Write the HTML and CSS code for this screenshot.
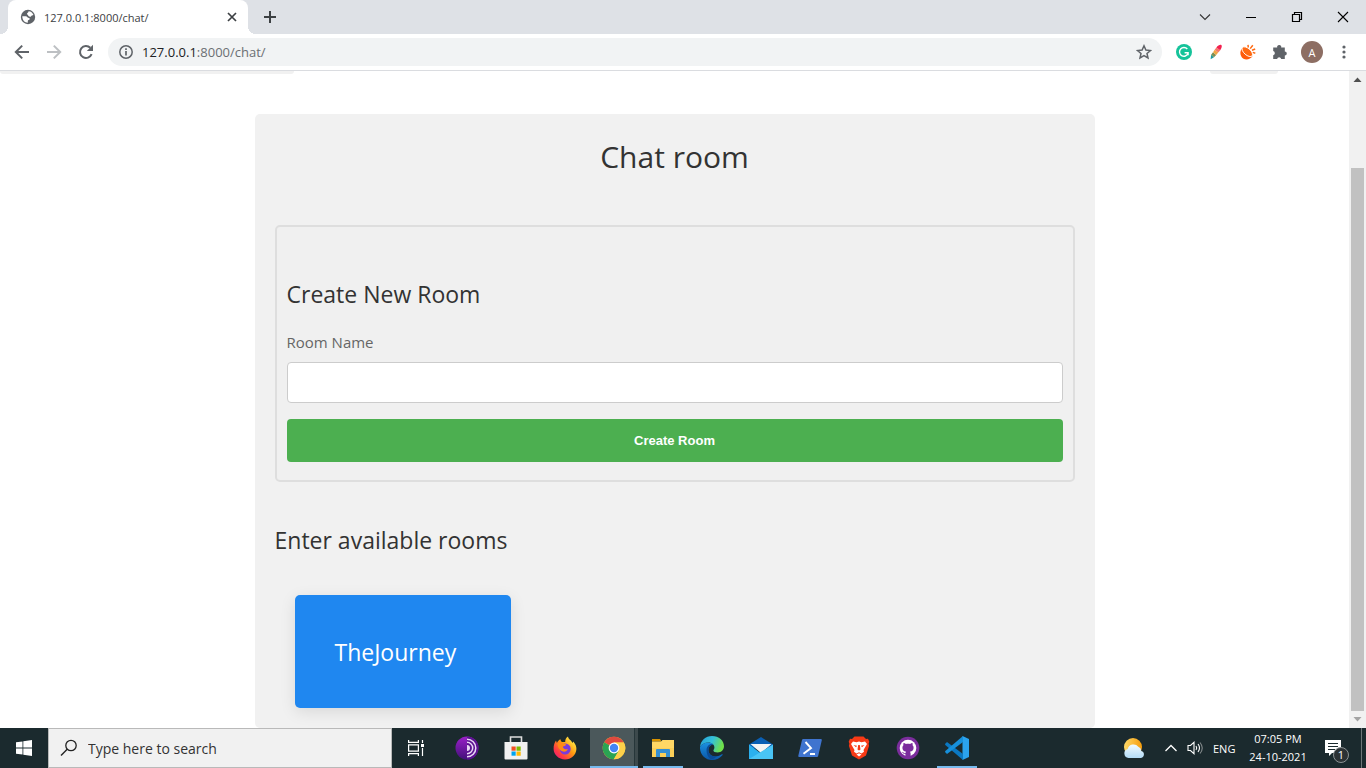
FILE: index.html
```
<!DOCTYPE html>
<html lang="en">
<head>
  <meta charset="UTF-8" />
  <meta name="viewport" content="width=device-width, initial-scale=1.0" />
  <title>127.0.0.1:8000/chat/</title>
  <link rel="stylesheet" href="styles.css">
</head>
<body>
  <!-- Browser tabs -->
  <header class="tabstrip">
    <div class="tab">
      <svg width="16" height="16" viewBox="0 0 16 16"><circle cx="8" cy="8" r="7.2" fill="#5f6368"/><path d="M2.300 7.200h3.500c1.500 0 1.800 1.800 3.200 1.800.9.200.9 1.400.2 1.800-1 .2-1.400.8-1.400 1.700v1.200C4.800 13.600 2.200 11 2.300 7.200z" fill="#fff"/><path d="M8.600 2.300c2.300.2 4 1.500 4.800 3.500-.8.800-2 .7-2.400 1.600-.8.800-2.600.3-2.800-.8-.1-.9-1.200-.8-1.200-1.800 0-1 1.400-.6 1.600-2.500z" fill="#fff"/></svg>
      <span class="tab-title">127.0.0.1:8000/chat/</span>
      <button class="icon-btn" aria-label="Close tab"><svg width="10" height="10" viewBox="0 0 10 10"><path d="M1 1l8 8M9 1L1 9" stroke="#3c4043" stroke-width="1.7"/></svg></button>
    </div>
    <button class="icon-btn new-tab" aria-label="New tab"><svg width="14" height="14" viewBox="0 0 14 14"><path d="M7 1v12M1 7h12" stroke="#3c4043" stroke-width="2"/></svg></button>
    <div class="window-buttons">
      <button class="icon-btn" aria-label="Tab search"><svg width="12" height="12" viewBox="0 0 12 12"><path d="M1 3.5l5 5 5-5" fill="none" stroke="#333" stroke-width="1.1"/></svg></button>
      <button class="icon-btn" aria-label="Minimize"><svg width="12" height="12" viewBox="0 0 12 12"><path d="M1 6.5h10" stroke="#000"/></svg></button>
      <button class="icon-btn" aria-label="Restore"><svg width="12" height="12" viewBox="0 0 12 12"><path d="M1.5 3.5h7v7h-7zM3.5 3V1.5h7v7H9" fill="none" stroke="#000" stroke-width="1.2"/></svg></button>
      <button class="icon-btn" aria-label="Close"><svg width="12" height="12" viewBox="0 0 12 12"><path d="M1 1l10 10M11 1L1 11" stroke="#000" stroke-width="1.1"/></svg></button>
    </div>
  </header>

  <!-- Address bar -->
  <nav class="toolbar">
    <div class="nav-buttons">
      <button class="icon-btn" aria-label="Back"><svg width="16" height="16" viewBox="0 0 16 16"><path d="M15 8H2M8.2 1.6L1.8 8l6.4 6.4" fill="none" stroke="#5f6368" stroke-width="2"/></svg></button>
      <button class="icon-btn" aria-label="Forward"><svg width="16" height="16" viewBox="0 0 16 16"><path d="M1 8h13M7.8 1.6L14.2 8l-6.4 6.4" fill="none" stroke="#bdc0c3" stroke-width="2"/></svg></button>
      <button class="icon-btn" aria-label="Reload"><svg width="16" height="16" viewBox="0 0 16 16"><path d="M13.6 10.2A6 6 0 1 1 12.3 3.8" fill="none" stroke="#5f6368" stroke-width="2"/><path d="M15 .8V7H8.8z" fill="#5f6368"/></svg></button>
    </div>
    <div class="address">
      <svg width="16" height="16" viewBox="0 0 16 16"><circle cx="8" cy="8" r="6.2" fill="none" stroke="#5f6368" stroke-width="1.5"/><path d="M8 7v4.4M8 4.2v1.7" stroke="#5f6368" stroke-width="1.7"/></svg>
      <div class="url" role="textbox" aria-label="Address" contenteditable="true" spellcheck="false"><b>127.0.0.1</b>:8000/chat/</div>
      <button class="icon-btn" aria-label="Bookmark"><svg width="16" height="16" viewBox="0 0 16 16"><path d="M8 1.800l1.900 4.200 4.600.5-3.500 3 1 4.500L8 11.700 4 14l1-4.500-3.500-3 4.600-.5z" fill="none" stroke="#5f6368" stroke-width="1.5"/></svg></button>
    </div>
    <div class="extensions">
      <button class="icon-btn" aria-label="Grammarly"><svg width="16" height="16" viewBox="0 0 16 16"><circle cx="8" cy="8" r="8" fill="#15c39a"/><path d="M11.300 5A4.400 4.400 0 1 0 12 9.500M8.600 8.800h3.500v2.500" fill="none" stroke="#fff" stroke-width="1.400"/></svg></button>
      <button class="icon-btn" aria-label="Color picker"><svg width="16" height="16" viewBox="0 0 16 16"><path d="M2.600 15.300l.5-4.500 2.900 2.500z" fill="#1d9aa0"/><path d="M3.100 10.800L5 8.300l3.200 2.600L6 13.300z" fill="#7d8f55"/><path d="M5 8.300l1.700-2.500L10.200 8.500l-2 2.400z" fill="#f2a443"/><path d="M6.700 5.800l1.700-2.400 3.800 2.800-2 2.300z" fill="#f4776a"/><path d="M8.400 3.400C10 1.300 12.300.200 13.300 1s.5 3-1.100 5.200z" fill="#f3204f"/></svg></button>
      <button class="icon-btn" aria-label="Coconut"><svg width="16" height="16" viewBox="0 0 16 16"><path d="M2 4.500C-.8 8 .2 13 3.500 14.800c3.300 1.600 7.500 0 9-2.800C8 12.500 3.500 9 2 4.500z" fill="#ff5b0b"/><ellipse cx="7.300" cy="7.700" rx="6.400" ry="3.300" transform="rotate(41 7.300 7.700)" fill="#ff6a13" stroke="#fff" stroke-width=".9"/><path d="M8.300 3.500L8 .8M10.200 4.600l2.600-3.300M12 6.200l3.200-1.200M12.800 8.400l2.500.8" stroke="#ff6a13" stroke-width="1.500"/></svg></button>
      <button class="icon-btn" aria-label="Extensions"><svg width="16" height="16" viewBox="0 0 16 16"><path d="M1.200 3.600h4A2 2 0 0 1 7.200 1a2 2 0 0 1 2 2.600h3.600v3.800a2 2 0 1 1 0 4V15H9.200a2.100 2.100 0 0 0-4.100 0H1.200v-3.800a2.100 2.100 0 0 0 0-4.100z" fill="#5f6368"/></svg></button>
      <button class="avatar" aria-label="Profile">A</button>
      <button class="icon-btn" aria-label="Menu"><svg width="16" height="16" viewBox="0 0 16 16" fill="#5f6368"><circle cx="8" cy="3" r="1.600"/><circle cx="8" cy="8" r="1.600"/><circle cx="8" cy="13" r="1.600"/></svg></button>
    </div>
  </nav>

  <!-- Page content -->
  <div class="viewport">
    <main class="page">
      <div class="site-nav">
        <div class="site-brand"></div>
        <div class="site-link"></div>
      </div>
      <div class="container">
        <h1>Chat room</h1>
        <form class="room-form">
          <h2>Create New Room</h2>
          <label for="room-name">Room Name</label>
          <input type="text" id="room-name" name="room-name">
          <button type="submit">Create Room</button>
        </form>
        <h2>Enter available rooms</h2>
        <div class="rooms">
          <a class="room" href="#">TheJourney</a>
        </div>
      </div>
    </main>
    <div class="scrollbar">
      <svg width="17" height="17" viewBox="0 0 17 17"><path d="M4.500 11h8l-4-4.500z" fill="#505050"/></svg>
      <div class="thumb"></div>
      <svg width="17" height="17" viewBox="0 0 17 17"><path d="M4.500 6h8l-4 4.500z" fill="#a3a3a3"/></svg>
    </div>
  </div>

  <!-- Windows taskbar -->
  <footer class="taskbar">
    <button class="task start" aria-label="Start"><svg width="16" height="16" viewBox="0 0 16 16" fill="#fff"><path d="M0 2.300l6.500-.9v6.100H0zM7.300 1.200L16 0v7.500H7.300zM0 8.400h6.500v6.200L0 13.700zM7.300 8.400H16V16l-8.700-1.200z"/></svg></button>
    <label class="search">
      <svg width="18" height="18" viewBox="0 0 18 18"><circle cx="11" cy="6.500" r="5.200" fill="none" stroke="#222" stroke-width="1.300"/><path d="M7.200 10.300L1 16.500" stroke="#222" stroke-width="1.400"/></svg>
      <input type="text" placeholder="Type here to search" aria-label="Search">
    </label>
    <button class="task view" aria-label="Task View"><svg width="18" height="16" viewBox="0 0 18 16" fill="none" stroke="#fff" stroke-width="1.200"><path d="M1.600 0v2.400h9.800V0M1.600 16v-2.400h9.800V16M1.600 4.900h9.800v6.200H1.600zM15.500 0v3M15.500 8v8"/><path d="M14 4h3v3h-3z" fill="#fff" stroke="none"/></svg></button>
    <button class="task" aria-label="Tor Browser"><svg width="24" height="24" viewBox="0 0 24 24"><defs><linearGradient id="tor" x2="0" y2="1"><stop stop-color="#9a20c8"/><stop offset="1" stop-color="#43107a"/></linearGradient></defs><circle cx="12" cy="12" r="11.500" fill="url(#tor)"/><path d="M12 .5a11.500 11.500 0 0 1 0 23z" fill="#5b1290"/><path d="M12 3.200a8.800 8.800 0 0 1 0 17.600M12 6.300a5.700 5.700 0 0 1 0 11.400" fill="none" stroke="#e9d8f5" stroke-width="1.500"/><path d="M12 9a3 3 0 0 1 0 6z" fill="#e9d8f5"/></svg></button>
    <button class="task" aria-label="Microsoft Store"><svg width="24" height="24" viewBox="0 0 24 24"><path d="M6.500 7V1h11v6" fill="none" stroke="#ddd" stroke-width="1.600"/><path d="M.5 6h23v16.500a1 1 0 0 1-1 1h-21a1 1 0 0 1-1-1z" fill="#f1f1f1"/><path d="M7.500 10.500h4.200v4.200H7.500z" fill="#f25022"/><path d="M12.500 10.500h4.200v4.200h-4.200z" fill="#7fba00"/><path d="M7.500 15.500h4.200v4.200H7.500z" fill="#00a4ef"/><path d="M12.500 15.500h4.200v4.200h-4.200z" fill="#ffb900"/></svg></button>
    <button class="task" aria-label="Firefox"><svg width="24" height="24" viewBox="0 0 24 24"><defs><linearGradient id="fox" x1="1" x2="0" y2="1"><stop offset=".1" stop-color="#fff44f"/><stop offset=".45" stop-color="#ff980e"/><stop offset=".75" stop-color="#ff3647"/><stop offset="1" stop-color="#e31587"/></linearGradient></defs><path d="M15 .5c.3 2.800 3.200 3.500 4.500 6.500l.8-1.500C22.500 8 23.500 10.500 23.400 13 23.100 19 18.200 23.500 12 23.500S.6 18.800.6 12.800c0-3.300.8-5.800 2.400-8.200l.9 2.500C4.700 5 6 4 7.500 3.300c0 1.200.5 2 1.500 2.700h3.200C12.200 3.600 13 1.700 15 .5z" fill="url(#fox)"/><circle cx="12.200" cy="13" r="5.500" fill="#7a3bdc"/><path d="M4.600 7.500c2-1.500 4.600-1 5.600.3l3 .4c-.2 1.800-2.800 1.700-3.400 2.700.3 1 2.200 3.200 5.200 2.200-1 2.700-4.800 3.500-7.600 1.200-1.800-1.400-3-4.200-2.800-6.800z" fill="#ff8a16"/></svg></button>
    <button class="task active" aria-label="Google Chrome"><svg width="24" height="24" viewBox="0 0 24 24"><circle cx="12" cy="12" r="11.300" fill="#fc3"/><path d="M12 12L2.200 6.350A11.300 11.300 0 0 1 21.800 6.400H12z" fill="#e04a3f"/><path d="M2.200 6.350A11.300 11.300 0 0 0 11.800 23.300l5-8.600L12 12z" fill="#2aa453"/><path d="M21.800 6.400A11.300 11.300 0 0 1 11.800 23.300l5-8.600L12 6.400z" fill="#fdd04a"/><circle cx="12" cy="12" r="5.400" fill="#fff"/><circle cx="12" cy="12" r="4.200" fill="#4285f4"/></svg></button>
    <button class="task open" aria-label="File Explorer"><svg width="24" height="24" viewBox="0 0 24 24"><path d="M1 3h8l1.500 2.500H1z" fill="#d99300"/><path d="M1 5.500h9l1.500-1.500H23v17H1z" fill="#ffd765"/><path d="M1 12h22v9H1z" fill="#fbcf58"/><path d="M5 21v-7a1 1 0 0 1 1-1h12a1 1 0 0 1 1 1v7h-4v-4H9v4z" fill="#348fd3"/></svg></button>
    <button class="task" aria-label="Microsoft Edge"><svg width="24" height="24" viewBox="0 0 24 24"><defs><linearGradient id="edge-top" x2="1" y2=".3"><stop stop-color="#249fd8"/><stop offset=".55" stop-color="#35c1d9"/><stop offset="1" stop-color="#6fe04b"/></linearGradient><linearGradient id="edge-low" x2="0" y2="1"><stop stop-color="#1b91df"/><stop offset="1" stop-color="#0a56a8"/></linearGradient></defs><path d="M0 11C.6 4.600 5.600 0 12 0c7 0 12 4.700 12 10.300 0 3.600-2.800 6.200-6.300 6.200-2.800 0-4.300-1-4.300-2 0-.8 1-1.200 1-3 0-2.600-2.400-5-6-5C5 6.500 1.500 8.200 0 11z" fill="url(#edge-top)"/><path d="M0 11c1.500-3 4.800-4.500 8.400-4.500 2.200 0 4 .8 5 2-2.700 0-5 2.300-5 5.500 0 4.300 4 7 8.500 6.300 2-.3 3.800-1.200 5-2 .6-.3 1 .1.700.6C20.200 22 16.400 24 12 24 5 24-.4 18 0 11z" fill="url(#edge-low)"/><path d="M6.500 14c0-3.500 3-6.500 6.500-5.800-2.500.7-4.600 2.900-4.600 5.800 0 4.300 4 7 8.500 6.300-2 2-4.200 3-5.500 2.900C8.500 22.500 6.500 18.300 6.500 14z" fill="#0a4c97"/></svg></button>
    <button class="task" aria-label="Mail"><svg width="24" height="24" viewBox="0 0 24 24"><path d="M0 8.500L12 1l12 7.500v4H0z" fill="#0a5fb4"/><path d="M1.500 8h21L12 17z" fill="#f4f4f4"/><path d="M0 8.500L14 19 24 23H0z" fill="#2bb0ee"/><path d="M24 8.500V23H0z" fill="#49c4f5"/></svg></button>
    <button class="task" aria-label="PowerShell"><svg width="24" height="24" viewBox="0 0 24 24"><path d="M5.300 3h17.500a1 1 0 0 1 1 1.200l-3.700 16a1.200 1.200 0 0 1-1.200.8H1.300a1 1 0 0 1-1-1.200L4 4a1.300 1.300 0 0 1 1.300-1z" fill="#3f74cf"/><path d="M7.500 6l5.500 6-7.500 5.700M12 18h5" fill="none" stroke="#fff" stroke-width="1.900"/></svg></button>
    <button class="task" aria-label="Brave"><svg width="24" height="24" viewBox="0 0 24 24"><path d="M7.500.5h9L19 3l2-.3 1.300 3-.7 2 .5 2-3.100 9.800L12 23.500l-7-4L1.900 9.700l.5-2-.7-2L3 2.700 5 3z" fill="#f83a16"/><path d="M6 5.500l3.500.7L12 5.500l2.500.7 3.500-.7 2 2.600-3.500 6 .5 1.600-2.500 1.800-2.500-1.200-2.500 1.200L7 15.700l.5-1.600L4 8.100zM9.500 18.500l2.500-1.300 2.500 1.300-2.500 2z" fill="#fff"/><path d="M6.500 9l3.500.8-1 1.500zM17.500 9l-3.500.8 1 1.500zM11.200 9h1.600l.7 4.500-1.500 1-1.500-1z" fill="#f83a16"/></svg></button>
    <button class="task" aria-label="GitHub Desktop"><svg width="24" height="24" viewBox="0 0 24 24"><circle cx="12" cy="12" r="11.300" fill="#7b2d9d"/><circle cx="12" cy="12" r="8.300" fill="#fff"/><path d="M9.400 21v-3.200c-1.900.3-2.700-.5-3.500-2 1.300.1 1.600 1 2.400 1.200.6.100 1 0 1.300-.3.100-.5.300-.8.500-1-2.500-.4-3.700-1.700-3.700-4 0-1 .4-1.800 1-2.400-.2-.8-.1-1.600.2-2.300.9 0 1.600.4 2.300.9 1.400-.3 2.800-.3 4.200 0 .7-.5 1.400-.9 2.300-.9.300.7.400 1.500.2 2.300.6.600 1 1.400 1 2.400 0 2.300-1.200 3.600-3.700 4 .5.500.7 1.100.7 1.800V21z" fill="#7b2d9d"/></svg></button>
    <button class="task open" aria-label="Visual Studio Code"><svg width="24" height="24" viewBox="0 0 24 24"><path d="M17.500 0L24 3v18l-6.500 3z" fill="#2ba3ee"/><path d="M0 8l2-2 16 12v6L.3 9z" fill="#0b78c2"/><path d="M0 16l2 2L18 6V0L.3 15z" fill="#1790db"/></svg></button>

    <div class="tray">
      <svg class="weather" width="22" height="22" viewBox="0 0 22 22"><defs><linearGradient id="sun" x1="0" x2="1"><stop stop-color="#ffd968"/><stop offset="1" stop-color="#f59c0b"/></linearGradient><linearGradient id="cloud" x2="0" y2="1"><stop stop-color="#f2fbff"/><stop offset="1" stop-color="#b4dcf7"/></linearGradient></defs><circle cx="10" cy="10" r="9" fill="url(#sun)"/><path d="M5.500 21a4.600 4.600 0 0 1-.8-9 6 6 0 0 1 10.600-2.200 4.800 4.800 0 0 1 3 4.200 3.600 3.600 0 0 1-.3 7z" fill="url(#cloud)"/></svg>
      <button class="icon-btn" aria-label="Show hidden icons"><svg width="14" height="14" viewBox="0 0 14 14"><path d="M1.500 10L7 4.500l5.500 5.500" fill="none" stroke="#fff" stroke-width="1.300"/></svg></button>
      <button class="icon-btn" aria-label="Volume"><svg width="17" height="16" viewBox="0 0 17 16" fill="none" stroke="#fff" stroke-width="1.100"><path d="M1 5.500h2.500L7 2.300v11.400l-3.500-3.200H1z"/><path d="M9 6q1.500 2 0 4M11 4q3 4 0 8"/><path d="M13 2.500q4.500 5.500 0 11" stroke="#83898b"/></svg></button>
      <span class="lang">ENG</span>
      <div class="clock"><span>07:05 PM</span><span>24-10-2021</span></div>
      <button class="icon-btn notify" aria-label="Notifications"><svg width="17" height="17" viewBox="0 0 17 17"><path d="M0 0h16v13H7l-3 3v-3H0z" fill="#fff"/><path d="M3 3.500h10M3 6.500h10M3 9.500h7" stroke="#1b2a2e"/></svg><span class="badge">1</span></button>
      <div class="show-desktop"></div>
    </div>
  </footer>
</body>
</html>
```
FILE: styles.css
```
:root {
  --chrome-bg: #dee1e6;
  --field-bg: #f1f3f4;
  --panel-bg: #f1f1f1;
  --taskbar-bg: #1b2a2e;
  --taskbar-line: #76b9ed;
  --green: #4caf50;
  --blue: #1f87f0;
}

* {
  box-sizing: border-box;
}
body {
  margin: 0;
  height: 100vh;
  display: flex;
  flex-direction: column;
  overflow: hidden;
  background: #fff;
  color: #333;
  font-family: 'Segoe UI', 'Open Sans', sans-serif;
  font-size: 16px;
}
svg {
  display: block;
  flex: none;
}
button {
  padding: 0;
  border: none;
  background: none;
  font-family: inherit;
  cursor: pointer;
}
.icon-btn {
  display: flex;
  align-items: center;
  justify-content: center;
}

/* tabs */
.tabstrip {
  display: flex;
  align-items: center;
  height: 34px;
  padding-left: 8px;
  background: var(--chrome-bg);
}
.tab {
  position: relative;
  display: flex;
  align-items: center;
  gap: 8px;
  width: 240px;
  height: 34px;
  padding: 0 11px 0 12px;
  background: #fff;
  border-radius: 8px 8px 0 0;
}
.tab::before, .tab::after {
  content: "";
  position: absolute;
  bottom: 0;
  width: 8px;
  height: 8px;
}
.tab::before {
  left: -8px;
  background: radial-gradient(circle at 0 0, transparent 8px, #fff 8px);
}
.tab::after {
  right: -8px;
  background: radial-gradient(circle at 100% 0, transparent 8px, #fff 8px);
}
.tab-title {
  flex: 1;
  font-size: 11px;
  color: #3c4043;
}
.new-tab {
  margin-left: 15px;
}
.window-buttons {
  display: flex;
  margin-left: auto;
  height: 28px;
}
.window-buttons .icon-btn {
  width: 46px;
}

/* address bar */
.toolbar {
  display: flex;
  align-items: center;
  height: 37px;
  padding-right: 14px;
  border-bottom: 1px solid #dadce0;
}
.nav-buttons {
  display: flex;
  gap: 16px;
  padding: 0 14px;
}
.address {
  flex: 1;
  display: flex;
  align-items: center;
  gap: 8px;
  height: 28px;
  padding: 0 10px;
  background: var(--field-bg);
  border-radius: 14px;
}
.url {
  flex: 1;
  font-size: 13px;
  line-height: 20px;
  color: #6b6f73;
  outline: none;
}
.url b {
  font-weight: 400;
  color: #202124;
}
.extensions {
  display: flex;
  align-items: center;
  gap: 16px;
  padding-left: 14px;
}
.avatar {
  width: 22px;
  height: 22px;
  margin: 0 -3px;
  border-radius: 50%;
  background: #8d6e63;
  color: #fff;
  font-size: 11px;
}

/* page */
.viewport {
  flex: 1;
  display: flex;
  min-height: 0;
}
.page {
  flex: 1;
  overflow: hidden;
}
.site-nav {
  display: flex;
  justify-content: space-between;
  height: 43px;
  padding-right: 71px;
}
.site-brand, .site-link {
  height: 3px;
  background: var(--panel-bg);
  border-radius: 0 0 4px 4px;
}
.site-brand {
  width: 294px;
}
.site-link {
  width: 68px;
}
.container {
  max-width: 840px;
  margin: 0 auto;
  padding: 20px;
  background: var(--panel-bg);
  border-radius: 5px;
}
h1, h2 {
  margin: 0;
  font-weight: 400;
}
h1 {
  margin-bottom: 45px;
  font-size: 30px;
  line-height: 46px;
  text-align: center;
}
h2 {
  font-size: 23px;
  line-height: 36px;
}
.room-form {
  display: flex;
  flex-direction: column;
  margin-bottom: 40px;
  padding: 49px 10px 18px;
  background: #f0f0f0;
  border: 2px solid #dedede;
  border-radius: 5px;
}
.room-form label {
  margin: 18px 0 8px;
  font-size: 15px;
  line-height: 24px;
  color: #666;
}
.room-form input {
  height: 41px;
  padding: 12px;
  border: 1px solid #ccc;
  border-radius: 4px;
  background: #fff;
}
.room-form button {
  height: 43px;
  margin-top: 16px;
  border-radius: 4px;
  background: var(--green);
  color: #fff;
  font: 700 13px 'Liberation Sans', Arial, sans-serif;
}
.rooms {
  display: flex;
  padding: 37px 20px 0;
}
.room {
  min-width: 216px;
  padding: 41px 40px 39px;
  border-radius: 5px;
  background: var(--blue);
  box-shadow: 0 4px 16px rgba(0, 0, 0, .1);
  color: #fff;
  font-size: 23px;
  line-height: 33px;
  text-decoration: none;
}
.scrollbar {
  display: flex;
  flex-direction: column;
  width: 17px;
  background: #f1f1f1;
}
.thumb {
  flex: 1;
  margin: 80px 2px 0;
  background: #c1c1c1;
}

/* taskbar */
.taskbar {
  display: flex;
  height: 40px;
  background: var(--taskbar-bg);
  color: #fff;
}
.task {
  display: flex;
  align-items: center;
  justify-content: center;
  width: 48px;
  margin-right: 1px;
}
.task.start {
  margin: 0;
}
.task.view {
  margin-right: 3px;
}
.task.active {
  background: linear-gradient(90deg, #4b585b 44px, #26363a 44px, #26363a 45px, #3c494c 45px);
  box-shadow: inset 0 -2px var(--taskbar-line);
}
.task.open {
  background: linear-gradient(var(--taskbar-line), var(--taskbar-line)) center bottom / 40px 2px no-repeat;
}
.search {
  display: flex;
  align-items: center;
  gap: 10px;
  width: 344px;
  padding: 0 11px;
  border: 1px solid #b9b9b9;
  background: #f1f1f1;
}
.search input {
  flex: 1;
  padding: 0;
  border: none;
  background: none;
  font-family: inherit;
  font-size: 14px;
  outline: none;
}
.search input::placeholder {
  color: #333;
}
.tray {
  display: flex;
  align-items: center;
  margin-left: auto;
  font-size: 11px;
}
.weather {
  margin-right: 19px;
}
.tray .icon-btn {
  margin-right: 9px;
}
.lang {
  width: 26px;
}
.clock {
  display: flex;
  flex-direction: column;
  align-items: center;
  width: 78px;
  margin-right: 8px;
  line-height: 18px;
}
.tray .notify {
  position: relative;
  width: 17px;
  margin: 0 19px 0 0;
}
.badge {
  position: absolute;
  top: 7px;
  left: 8px;
  width: 16px;
  height: 16px;
  border: 1px solid #8c9294;
  border-radius: 50%;
  background: #2c3235;
  color: #fff;
  font-size: 11px;
  line-height: 14px;
}
.show-desktop {
  width: 5px;
  height: 40px;
  border-left: 1px solid #6d7678;
}
```
